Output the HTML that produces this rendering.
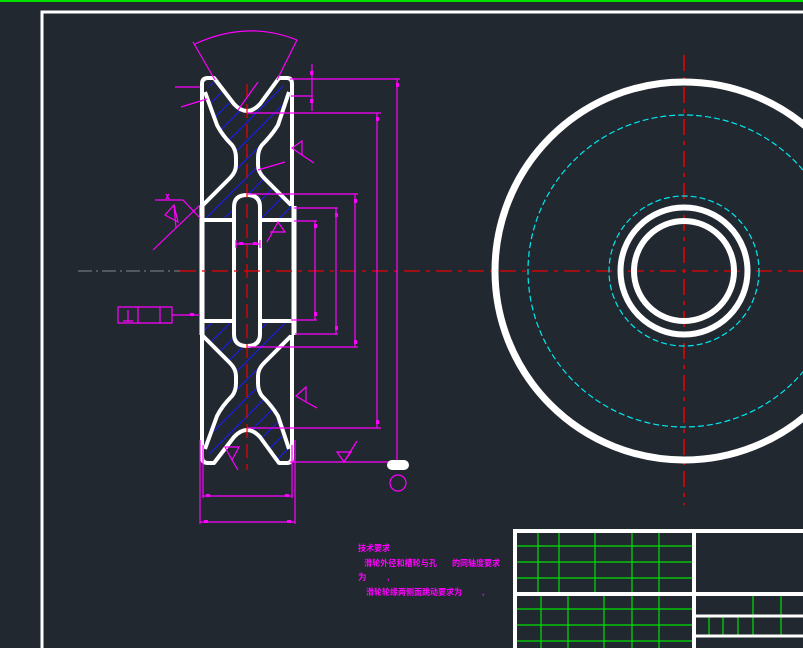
<!DOCTYPE html>
<html><head><meta charset="utf-8"><style>
html,body{margin:0;padding:0;background:#212830;}
svg{display:block}
text{font-family:"Liberation Sans","Noto Sans CJK SC",sans-serif;font-weight:bold;fill:#ff00ff;font-size:8.5px}
</style></head><body>
<svg width="803" height="648" viewBox="0 0 803 648" xmlns="http://www.w3.org/2000/svg">
<rect width="803" height="648" fill="#212830"/>
<line x1="0" y1="1" x2="803" y2="1" stroke="#00e000" stroke-width="2"/>
<path d="M42 648 L42 12 L803 12" fill="none" stroke="#fff" stroke-width="3"/>

<defs>
<pattern id="h" patternUnits="userSpaceOnUse" width="13" height="13" patternTransform="rotate(45)">
<line x1="1" y1="0" x2="1" y2="13" stroke="#1a1aff" stroke-width="1"/>
</pattern>
<clipPath id="web">
<path d="M214 80 L234 104 Q247 116 260 104 L279 80 L289 92 L278 125 L262 145 Q258 150 258 160 L258 168 L291 205 L294 218 L262 218 L262 207 Q262 193 247 193 Q232 193 232 207 L232 218 L202 218 L203 205 L236 170 L236 150 L217 125 L205 92 Z"/>
<path d="M214 80 L234 104 Q247 116 260 104 L279 80 L289 92 L278 125 L262 145 Q258 150 258 160 L258 168 L291 205 L294 218 L262 218 L262 207 Q262 193 247 193 Q232 193 232 207 L232 218 L202 218 L203 205 L236 170 L236 150 L217 125 L205 92 Z" transform="translate(0,541) scale(1,-1)"/>
</clipPath>
</defs>
<rect x="195" y="70" width="105" height="400" fill="url(#h)" clip-path="url(#web)"/>

<g id="half" fill="none" stroke="#fff" stroke-width="4" stroke-linejoin="round">
<path d="M202 206 L202 84 Q202 78 208 78 L214 78 L234 104 Q247 118 260 104 L279 78 L287 78 Q292 78 292 84 L292 206"/>
<path d="M205 92 L217 125 Q222 135 232 145 Q236 150 236 158 L236 165 Q236 172 230 178 L203 205"/>
<path d="M289 92 L278 125 Q272 135 262 145 Q258 150 258 158 L258 165 Q258 172 264 178 L291 205"/>
<path d="M202 220 L232 220 M262 220 L294 220" stroke-width="4"/>
<path d="M202 206 L202 272 M294 206 L294 272" stroke-width="5"/>
<path d="M234 272 L234 207 Q234 195 247 195 Q260 195 260 207 L260 272"/>
</g>
<use href="#half" transform="translate(0,541) scale(1,-1)"/>

<line x1="78" y1="271" x2="180" y2="271" stroke="#888" stroke-width="1" stroke-dasharray="14 4 2 4"/>
<line x1="180" y1="271" x2="803" y2="271" stroke="#e00" stroke-width="1.2" stroke-dasharray="16 6 4 6"/>
<line x1="247" y1="84" x2="247" y2="470" stroke="#e00" stroke-width="1.2" stroke-dasharray="14 6"/>
<line x1="684" y1="55" x2="684" y2="505" stroke="#e00" stroke-width="1.5" stroke-dasharray="16 6 4 6"/>

<circle cx="684" cy="271" r="189" fill="none" stroke="#fff" stroke-width="7"/>
<circle cx="684" cy="271" r="156" fill="none" stroke="#00e8f0" stroke-width="1.2" stroke-dasharray="6 3"/>
<circle cx="684" cy="271" r="75" fill="none" stroke="#00e8f0" stroke-width="1.2" stroke-dasharray="6 3"/>
<circle cx="684" cy="271" r="63.5" fill="none" stroke="#fff" stroke-width="6"/>
<circle cx="684" cy="271" r="50" fill="none" stroke="#fff" stroke-width="6"/>

<g stroke="#ff00ff" stroke-width="1.2" fill="none">
<path d="M195 44 Q247 20 297 40"/>
<path d="M193 42 L215 80 M297 40 L277 80"/>
<path d="M175 87 L200 87 M181 107 L207 99 M258 170 L285 162 M238 110 L258 82"/>
<path d="M312 64 L312 111 M290 79 L400 79 M291 96 L312 96"/>
<path d="M247 113 L381 113 M377 113 L377 428 M247 428 L381 428"/>
<path d="M397 79 L397 463 M290 462 L390 462"/>
<path d="M247 194 L358 194 M355 194 L355 347 M247 347 L358 347"/>
<path d="M294 208 L338 208 M336 208 L336 334 M295 334 L338 334"/>
<path d="M294 221 L317 221 M315 221 L315 320 M291 320 L317 320"/>
<path d="M203 445 L203 498 M292 445 L292 498 M203 496 L292 496"/>
<path d="M200 440 L200 524 M295 440 L295 524 M200 522 L295 522"/>
<path d="M236 244 L260 244 M236 240 L236 248 M260 240 L260 248"/>
<path d="M155 200 L183 200 L200 218 M153 250 L200 205 M174 205 L176 228 M165 215 L178 222 L174 205 Z"/>
<path d="M166 194 L169 199 M169 194 L166 199"/>
<path d="M267 242 L278 222 L285 232 L270 232"/>
<path d="M292 148 L302 141 L302 155 Z M302 155 L314 163"/>
<path d="M296 396 L306 387 L306 402 Z M306 402 L317 408"/>
<path d="M225 447 L239 447 L232 460 Z M232 460 L238 470"/>
<path d="M337 452 L351 452 L344 462 Z M344 462 L357 441"/>
<path d="M118 307 L172 307 L172 323 L118 323 Z M138 307 L138 323 M160 307 L160 323 M172 315 L200 315 M123 321 L133 321 M128 310 L128 321"/>
<circle cx="398" cy="483" r="8"/>
</g>
<g fill="#ff00ff">
<rect x="310" y="71" width="3" height="4"/><rect x="310" y="99" width="3" height="4"/>
<rect x="396" y="83" width="3" height="4"/><rect x="376" y="117" width="3" height="4"/><rect x="376" y="420" width="3" height="4"/>
<rect x="354" y="199" width="3" height="4"/><rect x="335" y="213" width="3" height="4"/><rect x="314" y="224" width="3" height="4"/>
<rect x="314" y="312" width="3" height="4"/><rect x="335" y="326" width="3" height="4"/><rect x="354" y="340" width="3" height="4"/>
<rect x="206" y="494" width="4" height="3"/><rect x="285" y="494" width="4" height="3"/>
<rect x="204" y="520" width="4" height="3"/><rect x="287" y="520" width="4" height="3"/>
<rect x="239" y="242" width="4" height="3"/><rect x="253" y="242" width="4" height="3"/>
<rect x="190" y="313" width="4" height="3"/>
</g>
<rect x="387" y="460" width="22" height="10" rx="5" fill="#fff"/>

<text x="358" y="551" textLength="32" lengthAdjust="spacingAndGlyphs">技术要求</text>
<text x="364" y="566" textLength="73" lengthAdjust="spacingAndGlyphs">滑轮外径和槽轮与孔</text><text x="452" y="566" textLength="48" lengthAdjust="spacingAndGlyphs">的同轴度要求</text>
<text x="358" y="580">为</text><text x="387" y="580">,</text>
<text x="366" y="595" textLength="96" lengthAdjust="spacingAndGlyphs">滑轮轮缘两侧面跳动要求为</text><text x="482" y="595">,</text>

<g stroke="#00e000" stroke-width="1.2">
<path d="M515 546 L694 546 M515 562 L694 562 M515 578 L694 578"/>
<path d="M538 531 L538 594 M559 531 L559 594 M595 531 L595 594 M632 531 L632 594 M659 531 L659 594"/>
<path d="M515 609 L694 609 M515 625 L694 625 M515 641 L694 641"/>
<path d="M541 596 L541 648 M568 596 L568 648 M604 596 L604 648 M632 596 L632 648 M659 596 L659 648"/>
<path d="M709 617 L709 636 M723 617 L723 636 M738 617 L738 636 M753 596 L753 636 M781 596 L781 636"/>
</g>
<g stroke="#fff" fill="none">
<path d="M515 648 L515 531 L803 531" stroke-width="4"/>
<path d="M515 594 L803 594" stroke-width="4"/>
<path d="M694 531 L694 648" stroke-width="4"/>
<path d="M694 616 L803 616 M694 636 L803 636" stroke-width="3"/>
</g>
</svg>
</body></html>
